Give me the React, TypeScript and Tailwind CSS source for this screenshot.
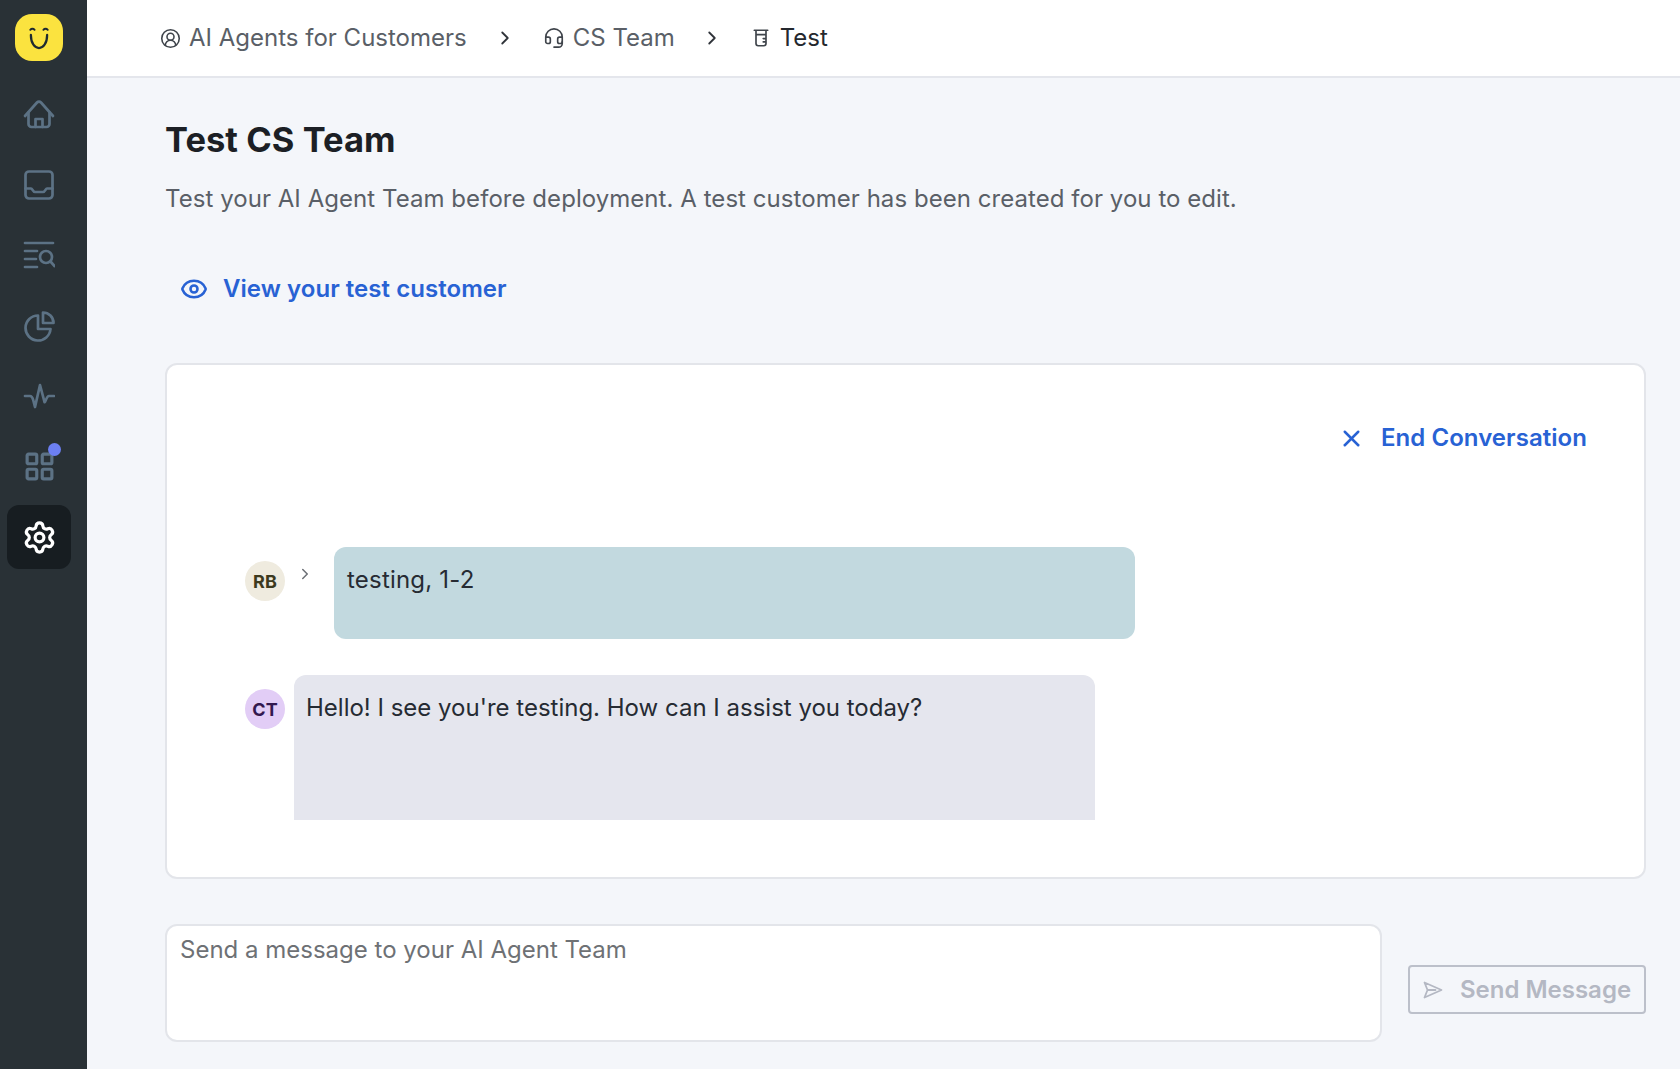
import { ChevronRight, CircleUserRound, Eye, Headset, LayoutGrid, Settings, X } from "lucide-react"

const font = { fontFamily: "Inter, 'Liberation Sans', sans-serif" }

function NavSvg({ children }: { children: React.ReactNode }) {
  return (
    <svg width="32" height="32" viewBox="0 0 32 32" fill="none" stroke="currentColor" strokeWidth="2.700" strokeLinejoin="round" strokeLinecap="round">
      {children}
    </svg>
  )
}

function HomeIcon() {
  return (
    <NavSvg>
      <path d="M2 18 14 4.500c1.200-1.300 2.800-1.300 4 0L30 18" />
      <path d="M5.500 14.500V26a3 3 0 0 0 3 3h15a3 3 0 0 0 3-3V14.500" />
      <path d="M12.500 29v-8h7v8" />
    </NavSvg>
  )
}

function InboxIcon() {
  return (
    <NavSvg>
      <rect x="2.500" y="2.500" width="27" height="27" rx="3.500" />
      <path d="M2.500 19.500h5.500c1.500 0 1.600 3.500 4 3.500h8c2.400 0 2.500-3.500 4-3.500h5.500" />
    </NavSvg>
  )
}

function ListSearchIcon() {
  return (
    <NavSvg>
      <path d="M2 4h28M2 12h12M2 20h11M2 28h12" />
      <circle cx="23" cy="18" r="6" />
      <path d="m27.500 22.500 4 4.500" />
    </NavSvg>
  )
}

function PieIcon() {
  return (
    <NavSvg>
      <path d="M15 5.500a12.500 12.500 0 1 0 12.500 13.500H15Z" />
      <path d="M20 2.500a10.500 10.500 0 0 1 10.500 10.500H20Z" />
    </NavSvg>
  )
}

function PulseIcon() {
  return (
    <NavSvg>
      <path d="M2 16h5c2 0 2.500 1.500 3.200 4l1.800 7 5-22 4.500 17c.8 1.500 1.800-6 4.500-6H31" />
    </NavSvg>
  )
}

function BeakerIcon() {
  return (
    <svg width="18" height="20" viewBox="0 0 16 18" fill="none" stroke="currentColor" strokeWidth="1.500" strokeLinejoin="round" strokeLinecap="round">
      <path d="M2 2h12M3.500 2v12c0 1.200.8 2 2 2h5c1.200 0 2-.8 2-2V2M3.500 6h9M10 9.500h2.500M10 12.500h2.500" />
    </svg>
  )
}

function PlaneIcon() {
  return (
    <svg width="20" height="18" viewBox="0 0 20 18" fill="none" stroke="currentColor" strokeWidth="1.800" strokeLinejoin="round" strokeLinecap="round">
      <path d="M1.500 1.500 18.500 9 1.500 16.500 4.500 9ZM4.500 9h8" />
    </svg>
  )
}

function SmileLogo() {
  return (
    <svg width="30" height="30" viewBox="0 0 24 24" fill="none" stroke="#1f2a30" strokeWidth="1.800" strokeLinecap="round">
      <path d="M5.500 9.500c0 14 13 14 13 0" />
      <path d="M5 5.500c1-1.200 2.500-1.200 3.500 0M15.500 5.500c1-1.200 2.500-1.200 3.500 0" strokeWidth="1.500" />
    </svg>
  )
}

function NavItem({ children, active }: { children: React.ReactNode; active?: boolean }) {
  return (
    <div className={`relative flex h-16 w-16 items-center justify-center rounded-xl ${active ? "bg-[#171d21] text-white" : "text-[#5c7285]"}`}>
      {children}
    </div>
  )
}

export default function App() {
  return (
    <div style={font} className="flex h-screen w-full overflow-hidden bg-[#f4f6fa] tracking-[0.05px]">
      {/* Sidebar */}
      <aside className="flex w-[87px] shrink-0 flex-col items-start bg-[#293136] pl-[7px] pt-[14px]">
        <div className="ml-[8px] flex h-[47px] w-[48px] items-center justify-center rounded-[17px] bg-[#fbe33f]">
          <SmileLogo />
        </div>
        <div className="mt-[21px] flex flex-col gap-[6.500px]">
          <NavItem><HomeIcon /></NavItem>
          <NavItem><InboxIcon /></NavItem>
          <NavItem><ListSearchIcon /></NavItem>
          <NavItem><PieIcon /></NavItem>
          <NavItem><PulseIcon /></NavItem>
          <NavItem>
            <LayoutGrid size={33} strokeWidth={2.300} />
            <span className="absolute right-[10px] top-[8px] h-[13px] w-[13px] rounded-full bg-[#6c7ff2]" />
          </NavItem>
          <NavItem active><Settings size={35} strokeWidth={2.200} /></NavItem>
        </div>
      </aside>

      <div className="flex min-w-0 flex-1 flex-col">
        {/* Breadcrumb */}
        <header className="flex h-[78px] shrink-0 items-center border-b-2 border-[#e4e6ec] bg-white pl-[73px] text-[24px] tracking-normal text-[#5a5f67]">
          <CircleUserRound size={21} strokeWidth={1.800} className="text-[#3f444b]" />
          <span className="ml-[8px]">AI Agents for Customers</span>
          <ChevronRight size={22} strokeWidth={2} className="ml-[27px] text-[#30343a]" />
          <Headset size={22} strokeWidth={1.800} className="ml-[27px] text-[#3f444b]" />
          <span className="ml-[8px]">CS Team</span>
          <ChevronRight size={22} strokeWidth={2} className="ml-[26px] text-[#30343a]" />
          <span className="ml-[29px] text-[#3f444b]"><BeakerIcon /></span>
          <span className="ml-[10px] text-[#24282e]">Test</span>
        </header>

        {/* Page */}
        <main className="flex min-h-0 flex-1 flex-col pl-[78px] pr-[34px]">
          <h1 className="mt-[39px] text-[34.500px] font-bold leading-[46px] text-[#1c1f25]">Test CS Team</h1>
          <p className="mt-[19px] text-[24px] leading-[34px] text-[#5a5f67]">
            Test your AI Agent Team before deployment. A test customer has been created for you to edit.
          </p>
          <a className="ml-[15px] mt-[56px] flex items-center gap-[15px] text-[24px] font-semibold leading-[34px] text-[#2862d4]">
            <Eye size={28} strokeWidth={2.200} />
            View your test customer
          </a>

          {/* Chat */}
          <section className="mt-[57px] h-[516px] shrink-0 rounded-xl border-2 border-[#e3e5ea] bg-white">
            <div className="flex justify-end pr-[57px] pt-[56px]">
              <button className="flex items-center gap-[16px] text-[24px] font-semibold leading-[34px] text-[#2862d4]">
                <X size={27} strokeWidth={2.200} />
                End Conversation
              </button>
            </div>
            <div className="mt-[92px] flex flex-col gap-[36px] pl-[78px]">
              <div className="flex items-start">
                <div className="mt-[14px] flex h-[40px] w-[40px] items-center justify-center rounded-full bg-[#efebdf] text-[18px] font-bold text-[#3d3a1e]">RB</div>
                <ChevronRight size={18} strokeWidth={2} className="ml-[11px] mt-[18px] text-[#6b6f75]" />
                <div className="ml-[20px] h-[92px] w-[801px] rounded-xl bg-[#c2d9df] px-[13px] py-[16px] text-[24px] leading-[34px] tracking-[0.2px] text-[#262b33]">testing, 1-2</div>
              </div>
              <div className="flex items-start">
                <div className="mt-[14px] flex h-[40px] w-[40px] items-center justify-center rounded-full bg-[#e2cdf6] text-[18px] font-bold text-[#33184f]">CT</div>
                <div className="ml-[9px] h-[145px] w-[801px] rounded-t-xl bg-[#e5e6ee] px-[12px] py-[16px] text-[24px] leading-[34px] tracking-normal text-[#262b33]">
                  Hello! I see you're testing. How can I assist you today?
                </div>
              </div>
            </div>
          </section>

          {/* Composer */}
          <div className="mt-[45px] flex items-end gap-[26px]">
            <textarea
              readOnly
              placeholder="Send a message to your AI Agent Team"
              className="h-[118px] w-[1217px] resize-none rounded-xl border-2 border-[#e3e5ea] bg-white px-[13px] py-[7px] text-[24px] leading-[34px] tracking-normal text-[#262b33] placeholder:text-[#6e7175] focus:outline-none"
            />
            <button className="mb-[28px] flex h-[49px] w-[238px] items-center justify-center gap-[17px] rounded border-2 border-[#bcc0ca] text-[24px] font-semibold tracking-normal text-[#b4b8c3]">
              <PlaneIcon />
              Send Message
            </button>
          </div>
        </main>
      </div>
    </div>
  )
}
